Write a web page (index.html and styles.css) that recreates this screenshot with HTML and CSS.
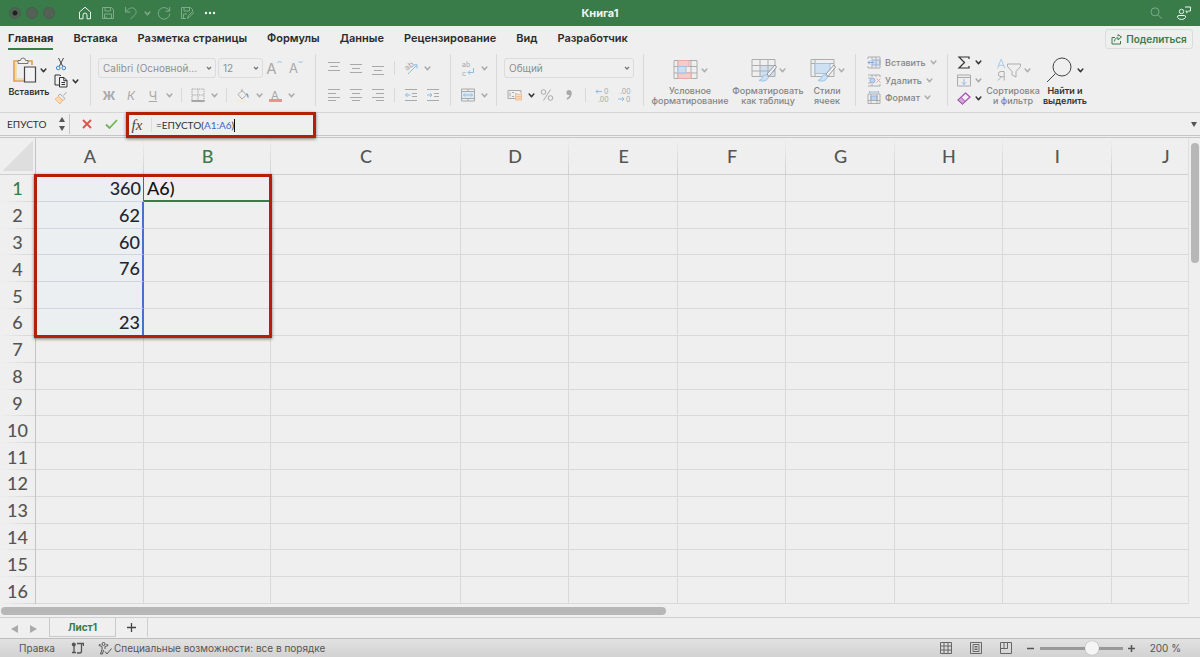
FILE: index.html
```html
<!DOCTYPE html>
<html lang="ru">
<head>
<meta charset="utf-8">
<title>Книга1</title>
<link rel="stylesheet" href="styles.css">
</head>
<body>
<svg class="defs" aria-hidden="true">
  <symbol id="chev" viewBox="0 0 6 6"><path d="M1 1.800 3 4 5 1.800" fill="none" stroke="currentColor" stroke-width="1.300" stroke-linecap="round" stroke-linejoin="round"/></symbol>
</svg>

<header class="titlebar">
  <div class="lights"><span class="light dot"></span><span class="light"></span><span class="light"></span></div>
  <div class="quick">
    <button class="q on" aria-label="Главная страница"><svg width="14" height="14" viewBox="0 0 14 14"><path d="M1.500 6 7 1.200 12.500 6V12.800H9V9a2 2 0 0 0-4 0v3.800H1.500z"/></svg></button>
    <button class="q" aria-label="Сохранить"><svg width="14" height="14" viewBox="0 0 14 14"><path d="M1.500 1.500h9l2 2v9h-11zM4 1.500V5h5.500V1.500M3.500 12.500V8h7v4.500M5 12.500V10.500"/></svg></button>
    <button class="q" aria-label="Отменить"><svg width="14" height="14" viewBox="0 0 14 14"><path d="M1.500 1v5h5M1.800 5.800C5 1.500 8.500 1 10.800 3c2.500 2.300 1 5-.6 6.500L6.500 13"/></svg></button>
    <button class="q narrow" aria-label="Список отмены"><svg class="chev"><use href="#chev"/></svg></button>
    <button class="q" aria-label="Повторить"><svg width="14" height="14" viewBox="0 0 14 14"><path d="M12.700 1v4.200H8.500M12.300 5A5.800 5.800 0 1 0 12.800 7.500"/></svg></button>
    <button class="q" aria-label="Сохранить как"><svg width="14" height="14" viewBox="0 0 14 14"><path d="M6 12.500H1.500v-11h9l2 2v2M4 1.500V5h5.500V1.500M3.500 12.500V8H7M7.500 12.500l1-3 4-4 1.200 1.300-4 4z"/></svg></button>
    <button class="q on" aria-label="Ещё"><svg width="14" height="14" viewBox="0 0 14 14"><g fill="currentColor" stroke="none"><circle cx="3" cy="7" r="1.200"/><circle cx="7" cy="7" r="1.200"/><circle cx="11" cy="7" r="1.200"/></g></svg></button>
  </div>
  <h1>Книга1</h1>
  <div class="tools">
    <button class="q" aria-label="Поиск"><svg width="14" height="14" viewBox="0 0 14 14"><circle cx="6" cy="5.800" r="4"/><path d="m9 8.800 4 4"/></svg></button>
    <button class="q on" aria-label="Совместная работа"><svg width="16" height="16" viewBox="0 0 16 16"><circle cx="5.500" cy="6.500" r="2.200"/><path d="M3 10.500h5.500q1.500 0 1 1.800-.8 2.200-4 2.200t-4-2.200q-.4-1.800 1.500-1.800zM9 2h5.500v4h-2l-1.800 1.800V6H9.500"/></svg></button>
  </div>
</header>

<nav class="tabs">
  <a class="tab current" href="#">Главная</a><a class="tab" href="#">Вставка</a><a class="tab" href="#">Разметка страницы</a><a class="tab" href="#">Формулы</a><a class="tab" href="#">Данные</a><a class="tab" href="#">Рецензирование</a><a class="tab" href="#">Вид</a><a class="tab" href="#">Разработчик</a>
  <button class="share"><svg width="11" height="11" viewBox="0 0 11 11"><path d="M4 3.500H1v6.500h8.500V7M3.500 7.500C3.500 5 5 3.800 7 3.800V5.800L10.500 3 7 .600v1.800"/></svg>Поделиться</button>
</nav>

<section class="ribbon">
  <div class="group g-clip">
    <button class="tall live">
      <span class="pic"><svg width="26" height="26" viewBox="0 0 26 26"><path d="M6 4H2v20h10M16 4h4v4" stroke="#e0a04c" stroke-width="1.600"/><path d="M4 6v16h8" stroke="#f0d79c" stroke-width="1.500"/><path d="M6 6.500V3.500h2.500a2.500 2.500 0 0 1 5 0H16v3z" stroke="#777"/><path d="M12.500 10h11v15h-11z" fill="#f3f3f3" stroke="#444" stroke-width="1.200"/></svg><svg class="chev"><use href="#chev"/></svg></span>
      <span>Вставить</span>
    </button>
    <div class="stack">
      <button class="ib live" aria-label="Вырезать"><svg width="14" height="14" viewBox="0 0 14 14"><path d="m4.500 1 4.300 8.500M9.500 1 5.200 9.500" stroke="#444"/><circle cx="4.200" cy="11" r="1.800" stroke="#3f87c8"/><circle cx="9.800" cy="11" r="1.800" stroke="#3f87c8"/></svg></button>
      <span class="pair live"><button class="ib" aria-label="Копировать"><svg width="14" height="14" viewBox="0 0 14 14"><path d="M5 11H1V1h5l1 1M5.500 3.500h4.500l3 3v6.500H5.500zM9.800 3.500v3.200H13M7.500 8.500h3.500M7.500 10.500h3.500"/></svg></button><button class="cb" aria-label="Параметры копирования"><svg class="chev"><use href="#chev"/></svg></button></span>
      <button class="ib" aria-label="Формат по образцу"><svg width="14" height="14" viewBox="0 0 14 14"><path d="m12.500 1-3 3.500M6 3l5 4.500-2 2-5-4.500z" stroke="#aaa"/><path d="m4.500 5.500 4 4L6 13 1 8z" fill="#f5dcc0" stroke="#eebb8c"/></svg></button>
    </div>
  </div>

  <div class="group rows g-font">
    <div class="row">
      <select class="font" aria-label="Шрифт"><option>Calibri (Основной...</option></select>
      <select class="size" aria-label="Размер шрифта"><option>12</option></select>
      <button class="ib w22" aria-label="Увеличить шрифт"><span class="big">A</span><svg class="mark" width="5" height="10" viewBox="0 0 5 10"><path d="m.5 3 2-2 2 2" stroke="#8fbbe2"/></svg></button>
      <button class="ib w22" aria-label="Уменьшить шрифт"><span class="mid">A</span><svg class="mark" width="5" height="10" viewBox="0 0 5 10"><path d="m.5 1 2 2 2-2" stroke="#8fbbe2"/></svg></button>
    </div>
    <div class="row">
      <button class="ib w22 bold">Ж</button><button class="ib w22 ital">К</button><button class="ib w22 under">Ч</button><button class="cb" aria-label="Вид подчёркивания"><svg class="chev"><use href="#chev"/></svg></button>
      <i class="sep"></i>
      <button class="ib w22" aria-label="Границы"><svg width="14" height="14" viewBox="0 0 14 14"><path d="M1 1h12v12M1 1v12M7 1v12M1 7h12" stroke-dasharray="1.500 .8"/><path d="M.5 13h13" stroke="#888" stroke-width="1.400"/></svg></button><button class="cb" aria-label="Виды границ"><svg class="chev"><use href="#chev"/></svg></button>
      <i class="sep"></i>
      <button class="ib w22" aria-label="Заливка"><svg width="14" height="14" viewBox="0 0 14 14"><path d="M6 1v3M2 6.500 6 2.500l4.500 4.500L6 11z"/><path d="M10.500 5.500q2 2 1.500 4" stroke="#6f9ecb" stroke-width="1.500"/><path d="M1 13h10" stroke="#f3ecd4" stroke-width="2"/></svg></button><button class="cb" aria-label="Цвет заливки"><svg class="chev"><use href="#chev"/></svg></button>
      <button class="ib w22 color">A</button><button class="cb" aria-label="Цвет текста"><svg class="chev"><use href="#chev"/></svg></button>
    </div>
  </div>

  <div class="group rows g-align">
    <div class="row">
      <button class="ib w22" aria-label="По верхнему краю"><svg width="14" height="14" viewBox="0 0 14 14"><path d="M1 1.500h12M3 5.500h8M1 9.500h12"/></svg></button><button class="ib w22" aria-label="По середине"><svg width="14" height="14" viewBox="0 0 14 14"><path d="M1 3.500h12M3 7.500h8M1 11.500h12"/></svg></button><button class="ib w22" aria-label="По нижнему краю"><svg width="14" height="14" viewBox="0 0 14 14"><path d="M1 5.500h12M3 9.500h8M1 13.500h12"/></svg></button>
      <i class="sep"></i>
      <button class="ib w22" aria-label="Ориентация"><svg width="16" height="16" viewBox="0 0 16 16"><text x="2" y="9" font-size="8" transform="rotate(-35 6 7)" class="gl">ab</text><path d="M5 14 14 5M10.500 4.800H14V8.500" stroke="#8fbbe2"/></svg></button><button class="cb" aria-label="Варианты ориентации"><svg class="chev"><use href="#chev"/></svg></button>
    </div>
    <div class="row">
      <button class="ib w22" aria-label="По левому краю"><svg width="14" height="14" viewBox="0 0 14 14"><path d="M1 1.500h12M1 5.500h8M1 9.500h12M1 12.500h8"/></svg></button><button class="ib w22" aria-label="По центру"><svg width="14" height="14" viewBox="0 0 14 14"><path d="M1 1.500h12M3 5.500h8M1 9.500h12M3 12.500h8"/></svg></button><button class="ib w22" aria-label="По правому краю"><svg width="14" height="14" viewBox="0 0 14 14"><path d="M1 1.500h12M5 5.500h8M1 9.500h12M5 12.500h8"/></svg></button>
      <i class="sep"></i>
      <button class="ib w22" aria-label="Уменьшить отступ"><svg width="14" height="14" viewBox="0 0 14 14"><path d="M1 1.500h12M8 5.500h5M8 8.500h5M1 12.500h12"/><path d="M6.500 7h-5M3.500 5l-2 2 2 2" stroke="#8fbbe2"/></svg></button><button class="ib w22" aria-label="Увеличить отступ"><svg width="14" height="14" viewBox="0 0 14 14"><path d="M1 1.500h12M8 5.500h5M8 8.500h5M1 12.500h12"/><path d="M1 7h5M4 5l2 2-2 2" stroke="#8fbbe2"/></svg></button>
    </div>
  </div>

  <div class="group rows g-wrap">
    <div class="row"><button class="ib w22" aria-label="Перенос текста"><svg width="14" height="18" viewBox="0 0 14 18"><text x="1" y="8" font-size="7" class="gl">ab</text><text x="1" y="17" font-size="7" class="gl">c</text><path d="M12.500 9v4.500H7M9 11.500l-2 2 2 2" stroke="#8fbbe2"/></svg></button><button class="cb" aria-label="Варианты переноса"><svg class="chev"><use href="#chev"/></svg></button></div>
    <div class="row"><button class="ib w22" aria-label="Объединить"><svg width="14" height="14" viewBox="0 0 14 14"><path d="M1 3.500h12v7H1z" fill="#dce8f4" stroke="none"/><path d="M.500 1h13v12H.500zM.500 3.500h13M.500 10.500h13M7 1v2.500M7 10.500V13"/><path d="M2.500 7h9M4 5.500 2.500 7 4 8.500M10 5.500 11.500 7 10 8.500" stroke="#8fbbe2"/></svg></button><button class="cb" aria-label="Варианты объединения"><svg class="chev"><use href="#chev"/></svg></button></div>
  </div>

  <div class="group rows g-number">
    <div class="row"><select class="format" aria-label="Числовой формат"><option>Общий</option></select></div>
    <div class="row">
      <button class="ib w22" aria-label="Денежный формат"><svg width="16" height="14" viewBox="0 0 16 14"><path d="M1 2.500h13v3M1 2.500v8h7M3 4.500v4M5 4.500h2M5 8.500h2M9 5v2"/><path d="M8.500 6.500h6v5.500h-6zM8.500 8.500h6M8.500 10.200h6" fill="#f9e2cb" stroke="#f0bf94"/></svg></button><button class="cb live" aria-label="Виды валют"><svg class="chev"><use href="#chev"/></svg></button>
      <button class="ib w22" aria-label="Процентный формат"><svg width="14" height="14" viewBox="0 0 14 14"><circle cx="3.500" cy="4" r="2.300"/><circle cx="10.500" cy="10" r="2.300"/><path d="M10.500 1.500 3.500 12.500"/></svg></button>
      <button class="ib w22" aria-label="Формат с разделителями"><svg width="10" height="14" viewBox="0 0 10 14"><circle cx="5" cy="4.500" r="2.600" fill="currentColor" stroke="none"/><path d="M6.900 5q0 4-4 6" stroke-width="1.600"/></svg></button>
      <i class="sep"></i>
      <button class="ib w22" aria-label="Увеличить разрядность"><svg width="14" height="16" viewBox="0 0 14 16"><text x="9" y="7" font-size="7" class="gl">0</text><text x="3" y="15" font-size="7" class="gl">.00</text><path d="M7 4.500H1M3 2.500l-2 2 2 2" stroke="#8fbbe2"/></svg></button><button class="ib w22" aria-label="Уменьшить разрядность"><svg width="14" height="16" viewBox="0 0 14 16"><text x="3" y="7" font-size="7" class="gl">.00</text><text x="9" y="15" font-size="7" class="gl">0</text><path d="M1 12h6M5 10l2 2-2 2" stroke="#8fbbe2"/></svg></button>
    </div>
  </div>

  <div class="group g-styles">
    <button class="tall"><span class="pic"><svg width="26" height="22" viewBox="0 0 26 22"><path d="M1 1.500h23v18H1zM5 1.500v18M18 1.500v18M1 7.500h23M1 14h23"/><path d="M5 1.500h11v6H5zM5 14h13v5.500H5z" fill="#f3cbc9" stroke="#e6aaa7"/><path d="M5 7.500h8V14H5z" fill="#c9dff2" stroke="#9cc3e6"/></svg><svg class="chev"><use href="#chev"/></svg></span><span>Условное<br>форматирование</span></button>
    <button class="tall"><span class="pic"><svg width="26" height="24" viewBox="0 0 26 24"><path d="M9 7.500h15V19H9z" fill="#cfe0f3" stroke="none"/><path d="M1 1.500h23v17H1zM9 1.500v17M17 1.500v17M1 7.500h23M1 13h23"/><path d="m24 7-8 9 2 2.500L25.500 9z" fill="#f3f3f3" stroke="#999"/><path d="M15.500 16.500q-4 0-4.500 4l-3 2q7 2 9.500-3z" fill="#cfe0f3" stroke="#9cc3e6"/></svg><svg class="chev"><use href="#chev"/></svg></span><span>Форматировать<br>как таблицу</span></button>
    <button class="tall"><span class="pic"><svg width="26" height="24" viewBox="0 0 26 24"><path d="M1 1.500h23v17H1zM5 1.500v17M1 5.500h23"/><path d="M5 5.500h15v10H5z" fill="#cfe0f3" stroke="#9cc3e6"/><path d="m24 7-8 9 2 2.500L25.500 9z" fill="#f3f3f3" stroke="#999"/><path d="M15.500 16.500q-4 0-4.500 4l-3 2q7 2 9.500-3z" fill="#cfe0f3" stroke="#9cc3e6"/></svg><svg class="chev"><use href="#chev"/></svg></span><span>Стили<br>ячеек</span></button>
  </div>

  <div class="group g-cells">
    <button class="line"><svg width="14" height="13" viewBox="0 0 14 13"><path d="M5 4h8v5H5z" fill="#cfdef3" stroke="#8fb2e2"/><path d="M1 3V1h12v11H1v-2M5 1v2.500M9 1v11M5 9v3"/><path d="M7 6.500H1M3 4.500l-2 2 2 2" stroke="#7fa9de"/></svg><span>Вставить</span><svg class="chev"><use href="#chev"/></svg></button>
    <button class="line"><svg width="14" height="13" viewBox="0 0 14 13"><path d="M1 1h12v2M1 12h12v-2M1 4h3M1 9h3M5 1v2M9 1v2M5 10v2"/><circle cx="5.500" cy="6.500" r="2.500" fill="#bdd4f0" stroke="#8fb2e2"/><path d="m9.500 4.500 4 4M13.500 4.500l-4 4" stroke="#e8a09a"/></svg><span>Удалить</span><svg class="chev"><use href="#chev"/></svg></button>
    <button class="line"><svg width="14" height="13" viewBox="0 0 14 13"><path d="M4 5h6v4.500H4z" fill="#bdd4f0" stroke="#8fb2e2"/><path d="M1 3h12v9.500H1zM4 3v9.500M10 3v9.500M1 9.500h12"/><path d="M2.500 1h9M2.500 0v2M11.500 0v2" stroke="#8fbbe2"/></svg><span>Формат</span><svg class="chev"><use href="#chev"/></svg></button>
  </div>

  <div class="group g-edit">
    <div class="stack even">
      <span class="pair live"><button class="ib" aria-label="Сумма"><svg width="14" height="13" viewBox="0 0 14 13"><path d="M12 3V1H2l5.500 5.500L2 12h10v-2" stroke-width="1.200"/></svg></button><button class="cb" aria-label="Функции"><svg class="chev"><use href="#chev"/></svg></button></span>
      <span class="pair"><button class="ib" aria-label="Заполнить"><svg width="14" height="13" viewBox="0 0 14 13"><path d="M.500 1h13v11H.500zM.500 3.500h13"/><path d="M7 5v5.500M4.800 8.300 7 10.500l2.200-2.200" stroke="#8fbbe2"/></svg></button><button class="cb" aria-label="Варианты заполнения"><svg class="chev"><use href="#chev"/></svg></button></span>
      <span class="pair live"><button class="ib" aria-label="Очистить"><svg width="14" height="13" viewBox="0 0 14 13"><path d="M8.500 1 13 5 5.500 12 1 8z" stroke="#a34cb0" stroke-width="1.200"/><path d="M4 5.300 8.200 9.500 5.500 12 1 8z" fill="#d7a5de" stroke="#a34cb0"/></svg></button><button class="cb" aria-label="Что очистить"><svg class="chev"><use href="#chev"/></svg></button></span>
    </div>
    <button class="tall"><span class="pic"><svg width="26" height="24" viewBox="0 0 26 24"><path d="M1.500 10.500 5.200 1l3.700 9.500M2.800 7.300h4.800" stroke="#a9cbe8"/><path d="M8.200 22.500v-9H5a2.500 2.500 0 0 0 0 5.200h3.200M5.500 18.700 1.800 22.500"/><path d="M11.500 6h13v2.500l-4.500 5V19l-4-2v-3.500l-4.500-5z"/></svg><svg class="chev"><use href="#chev"/></svg></span><span>Сортировка<br>и фильтр</span></button>
    <button class="tall live"><span class="pic find"><svg width="26" height="26" viewBox="0 0 26 26"><circle cx="16" cy="10" r="9"/><path d="M9.500 16.500 1 25"/></svg><svg class="chev"><use href="#chev"/></svg></span><span>Найти и<br>выделить</span></button>
  </div>
</section>

<section class="formulabar">
  <input class="namebox" aria-label="Имя" value="ЕПУСТО">
  <button class="fb step" aria-label="Список имён"><svg width="8" height="14" viewBox="0 0 8 14"><path d="M1 5 4 0l3 5zM1 9l3 5 3-5z" fill="#555" stroke="none"/></svg></button>
  <button class="fb" aria-label="Отмена"><svg width="10" height="10" viewBox="0 0 10 10"><path d="m1 1 8 8M9 1 1 9" stroke="#d9534f" stroke-width="1.800"/></svg></button>
  <button class="fb" aria-label="Ввод"><svg width="13" height="10" viewBox="0 0 13 10"><path d="m1 5.500 3.500 3.500L12 1" stroke="#6fb558" stroke-width="1.800"/></svg></button>
  <div class="entry">
    <button class="fx" aria-label="Вставить функцию"><i>fx</i></button>
    <div class="formula" role="textbox" aria-label="Строка формул" tabindex="0">=ЕПУСТО(<span class="ref">A1:A6</span>)<span class="caret"></span></div>
  </div>
  <button class="fb more" aria-label="Развернуть"><svg width="6" height="5" viewBox="0 0 6 5"><path d="M0 0h6L3 5z" fill="#555" stroke="none"/></svg></button>
</section>

<main class="sheet">
  <div class="gridwrap">
    <table>
      <colgroup><col class="c-num"><col class="c-a"><col class="c-b"><col class="c-c"><col><col><col><col><col><col><col></colgroup>
      <thead><tr><th class="corner"></th><th>A</th><th class="act">B</th><th>C</th><th>D</th><th>E</th><th>F</th><th>G</th><th>H</th><th>I</th><th>J</th></tr></thead>
      <tbody>
        <tr><th class="act">1</th><td class="src first">360</td><td class="edit">A6)</td><td></td><td></td><td></td><td></td><td></td><td></td><td></td><td></td></tr>
        <tr><th>2</th><td class="src">62</td><td></td><td></td><td></td><td></td><td></td><td></td><td></td><td></td><td></td></tr>
        <tr><th>3</th><td class="src">60</td><td></td><td></td><td></td><td></td><td></td><td></td><td></td><td></td><td></td></tr>
        <tr><th>4</th><td class="src">76</td><td></td><td></td><td></td><td></td><td></td><td></td><td></td><td></td><td></td></tr>
        <tr><th>5</th><td class="src"></td><td></td><td></td><td></td><td></td><td></td><td></td><td></td><td></td><td></td></tr>
        <tr><th>6</th><td class="src">23</td><td></td><td></td><td></td><td></td><td></td><td></td><td></td><td></td><td></td></tr>
        <tr><th>7</th><td></td><td></td><td></td><td></td><td></td><td></td><td></td><td></td><td></td><td></td></tr>
        <tr><th>8</th><td></td><td></td><td></td><td></td><td></td><td></td><td></td><td></td><td></td><td></td></tr>
        <tr><th>9</th><td></td><td></td><td></td><td></td><td></td><td></td><td></td><td></td><td></td><td></td></tr>
        <tr><th>10</th><td></td><td></td><td></td><td></td><td></td><td></td><td></td><td></td><td></td><td></td></tr>
        <tr><th>11</th><td></td><td></td><td></td><td></td><td></td><td></td><td></td><td></td><td></td><td></td></tr>
        <tr><th>12</th><td></td><td></td><td></td><td></td><td></td><td></td><td></td><td></td><td></td><td></td></tr>
        <tr><th>13</th><td></td><td></td><td></td><td></td><td></td><td></td><td></td><td></td><td></td><td></td></tr>
        <tr><th>14</th><td></td><td></td><td></td><td></td><td></td><td></td><td></td><td></td><td></td><td></td></tr>
        <tr><th>15</th><td></td><td></td><td></td><td></td><td></td><td></td><td></td><td></td><td></td><td></td></tr>
        <tr><th>16</th><td></td><td></td><td></td><td></td><td></td><td></td><td></td><td></td><td></td><td></td></tr>
      </tbody>
    </table>
    <div class="callout"></div>
  </div>
  <div class="vscroll"><div class="vthumb"></div></div>
</main>
<div class="hscroll"><div class="hthumb"></div></div>

<nav class="sheets">
  <button class="arrow" aria-label="Предыдущий лист"><svg width="7" height="8" viewBox="0 0 7 8"><path d="M7 0v8L0 4z" fill="#aaa" stroke="none"/></svg></button>
  <button class="arrow" aria-label="Следующий лист"><svg width="7" height="8" viewBox="0 0 7 8"><path d="M0 0v8l7-4z" fill="#aaa" stroke="none"/></svg></button>
  <button class="sheettab">Лист1</button>
  <button class="add" aria-label="Новый лист"><svg width="9" height="9" viewBox="0 0 9 9"><path d="M4.500 0v9M0 4.500h9" stroke="#444" stroke-width="1.300"/></svg></button>
</nav>

<footer class="status">
  <span class="mode">Правка</span>
  <button class="sb" aria-label="Запись макроса"><svg width="13" height="13" viewBox="0 0 13 13"><circle cx="2.800" cy="2.500" r="2" fill="#555" stroke="none"/><path d="M3 4v6M1 10.500h4M6 1.500h6.500v2.500M10.500 1.500v7.500q0 2-2 2H6" stroke="#555" stroke-width="1.300"/></svg></button>
  <button class="access"><svg width="14" height="13" viewBox="0 0 14 13"><circle cx="5.500" cy="2" r="1.500"/><path d="M1 3.500 4 4.500v3L2.500 12M10 3.500 7 4.500V7M1 3.500q0-1.500 1.500-1M10 3.500q0-1.500-1.500-1M5.500 8 4.500 12H2.500M7 9.500l2 2.500 4.500-5.500"/></svg>Специальные возможности: все в порядке</button>
  <div class="views">
    <button class="sb" aria-label="Обычный"><svg width="12" height="12" viewBox="0 0 12 12"><path d="M.500.500h11v11H.500zM4 .500v11M8 .500v11M.500 4h11M.500 8h11" stroke="#666"/></svg></button>
    <button class="sb" aria-label="Разметка страницы"><svg width="12" height="12" viewBox="0 0 12 12"><path d="M.500.500h11v11H.500zM3 2.500h6v7H3zM4.500 4.500h3M4.500 6h3M4.500 7.500h3" stroke="#666"/></svg></button>
    <button class="sb" aria-label="Страничный режим"><svg width="12" height="12" viewBox="0 0 12 12"><path d="M.500.500h11v11H.500zM4 .500v6M.500 6.500h7V.500" stroke="#666"/></svg></button>
  </div>
  <div class="zoom">
    <button class="sb sm" aria-label="Уменьшить"><svg width="7" height="7" viewBox="0 0 7 7"><path d="M0 3.500h7" stroke="#555" stroke-width="1.500"/></svg></button>
    <input type="range" min="10" max="300" value="200" aria-label="Масштаб">
    <button class="sb sm" aria-label="Увеличить"><svg width="7" height="7" viewBox="0 0 7 7"><path d="M0 3.500h7M3.500 0v7" stroke="#555" stroke-width="1.500"/></svg></button>
  </div>
  <span class="percent">200 %</span>
</footer>
</body>
</html>
```

FILE: styles.css
```css
* { box-sizing: border-box; }
html, body { margin: 0; height: 100%; }
body {
  display: flex;
  flex-direction: column;
  height: 100vh;
  overflow: hidden;
  background: #efefef;
  color: #262626;
  font-family: Inter, "Liberation Sans", sans-serif;
  font-size: 10px;
}
button {
  display: flex;
  align-items: center;
  justify-content: center;
  padding: 0;
  border: 0;
  background: none;
  color: inherit;
  font: inherit;
}
svg { display: block; flex: none; fill: none; stroke: currentColor; stroke-width: 1; }
.defs { position: absolute; width: 0; height: 0; }
.chev { width: 7px; height: 7px; }
.gl { fill: currentColor; stroke: none; font-family: Inter, sans-serif; }

/* title bar */
.titlebar {
  display: grid;
  grid-template-columns: 1fr auto 1fr;
  align-items: center;
  flex: none;
  height: 26px;
  background: #397b49;
  color: #f0f5f1;
}
.lights { display: flex; gap: 5px; padding-left: 9px; grid-column: 1; grid-row: 1; }
.light { width: 12px; height: 12px; border-radius: 50%; background: #546156; border: 1px solid #47604b; }
.dot { background: radial-gradient(circle, #1c241d 2px, #546156 3px); }
.quick { display: flex; gap: 9px; padding-left: 78px; grid-column: 1; grid-row: 1; }
.q { width: 14px; height: 20px; color: #80ab89; }
.q.narrow { width: 8px; margin: 0 -3px 0 -4px; }
.q.on { color: #eef5ef; }
h1 { margin: 0; font-size: 11px; font-weight: 700; grid-column: 2; }
.tools { display: flex; justify-content: flex-end; gap: 14px; padding-right: 9px; grid-column: 3; }

/* ribbon tabs */
.tabs { display: flex; align-items: center; gap: 20px; flex: none; height: 26px; padding: 0 8px; }
.tab {
  height: 22px;
  line-height: 20px;
  border-bottom: 2px solid transparent;
  color: #2b2b2b;
  font-size: 11px;
  font-weight: 600;
  text-decoration: none;
  white-space: nowrap;
}
.tab.current { border-color: #397b49; font-weight: 700; }
.share {
  gap: 4px;
  width: 88px;
  height: 20px;
  margin-left: auto;
  margin-right: -1px;
  border: 1px solid #dcdcdc;
  border-radius: 3px;
  color: #397b49;
  font-weight: 600;
}

/* ribbon */
.ribbon {
  display: flex;
  flex: none;
  height: 61px;
  padding: 2px 0 6px;
  border-bottom: 1px solid #d6d6d6;
  color: #a9a9a9;
}
.group { display: flex; flex: none; border-right: 1px solid #d9d9d9; }
.group:last-child { border-right: 0; }
.live { color: #333; font-weight: 600; }
.rows { flex-direction: column; justify-content: space-between; padding: 4px 0 0; }
.row { display: flex; align-items: center; height: 20px; }
.rows .row + .row { height: 22px; }
.ib { width: 14px; height: 16px; }
.w22 { width: 22px; }
.cb { width: 14px; height: 16px; }
.row .cb { width: 10px; }
.pair { display: flex; }
.stack { display: flex; flex-direction: column; justify-content: space-between; }
.sep { flex: none; width: 1px; height: 14px; margin: 0 5px; background: #d9d9d9; }
.cb + .sep { margin-left: 7px; }
.tall { flex-direction: column; justify-content: flex-start; font-size: 9px; line-height: 10px; white-space: nowrap; }
.tall:not(.live) { color: #858585; font-weight: 500; }
.pic { display: flex; align-items: center; justify-content: center; gap: 2px; height: 30px; }
.pic.find { gap: 5px; }
.tall:not(.live) svg { color: #adadad; }
.live .pic svg:first-child { color: #444; }

select {
  appearance: none;
  height: 20px;
  padding: 0 4px;
  border: 1px solid #dcdcdc;
  border-radius: 3px;
  background: url("data:image/svg+xml,%3Csvg xmlns='http://www.w3.org/2000/svg' width='6' height='6'%3E%3Cpath d='M1 2 3 4 5 2' fill='none' stroke='%23777' stroke-width='1.3'/%3E%3C/svg%3E") no-repeat right 3px center;
  color: #909090;
  font: inherit;
}
.font { width: 118px; margin-right: 2px; }
.size { width: 45px; }
.format { width: 130px; }

.g-clip { width: 91px; padding-left: 8px; gap: 4px; }
.g-clip .tall { width: 42px; line-height: 12px; }
.g-clip .tall .pic { height: 32px; }
.g-clip .stack { padding: 2px 0 0; }
.g-font { width: 225px; padding-left: 7px; }
.big { font-size: 15px; }
.mid { font-size: 13px; }
.mark { align-self: flex-start; }
.bold { font-size: 12px; font-weight: 700; }
.ital { font-size: 12px; font-style: italic; }
.under { font-size: 12px; text-decoration: underline; }
.color { height: 14px; font-size: 12px; background: linear-gradient(#e9938d, #e9938d) no-repeat center bottom / 13px 3px; }
.g-align { width: 135px; padding-left: 7px; }
.g-wrap { width: 46px; padding-left: 6px; }
.g-number { width: 147px; padding-left: 7px; }
.g-styles { width: 212px; padding-left: 7px; gap: 3px; }
.g-styles .tall:nth-child(1) { width: 78px; }
.g-styles .tall:nth-child(2) { width: 72px; }
.g-styles .tall:nth-child(3) { width: 40px; }
.g-styles .pic, .g-edit .pic { height: 34px; }
.g-cells { width: 92px; padding-left: 11px; flex-direction: column; justify-content: space-between; align-items: flex-start; }
.line { gap: 4px; height: 17px; color: #858585; font-size: 9px; font-weight: 500; }
.line > svg { color: #adadad; }
.g-edit { padding-left: 9px; gap: 1px; }
.g-edit .tall { width: 54px; }
.g-edit .tall.live { width: 48px; }

/* formula bar */
.formulabar { display: flex; align-items: center; flex: none; height: 25px; border-bottom: 3px double #c6c6c6; }
.namebox {
  width: 58px;
  height: 20px;
  padding: 0 0 0 7px;
  border: 0;
  background: none;
  color: #333;
  font: 10px Lato, "Noto Sans", sans-serif;
}
.fb { width: 25px; height: 20px; }
.step { width: 12px; border-right: 1px solid #c6c6c6; margin-right: 4px; padding-right: 3px; }
.entry {
  display: flex;
  align-items: center;
  width: 190px;
  height: 26px;
  margin: -1px 0 -3px 2px;
  border: 3px solid #b51f08;
  box-shadow: 0 1px 3px rgba(0, 0, 0, .5);
  z-index: 1;
}
.fx { width: 23px; height: 14px; padding-right: 6px; border-right: 1px solid #ddd; color: #444; font: 15px "Liberation Serif", serif; }
.formula { display: flex; align-items: center; padding-left: 4px; color: #333; font: 10px Lato, "Noto Sans", sans-serif; }
.ref { color: #3a66cc; }
.caret { width: 1px; height: 13px; background: #111; }
.more { width: 12px; margin-left: auto; }

/* worksheet */
.sheet { display: flex; flex: 1; min-height: 0; }
.gridwrap { position: relative; flex: 1; min-width: 0; overflow: hidden; }
table {
  width: 1220px;
  height: 100%;
  table-layout: fixed;
  border-collapse: separate;
  border-spacing: 0;
  color: #555;
  font-family: Lato, "Noto Sans", sans-serif;
  font-size: 18px;
}
.c-num { width: 36px; }
.c-a { width: 108px; }
.c-b { width: 127px; }
.c-c { width: 190px; }
th, td { padding: 0; font-weight: 500; line-height: 20px; }
thead tr { height: 37px; }
tbody tr { height: 26px; }
thead th {
  border-bottom: 1px solid #cfcfcf;
  background: linear-gradient(transparent, #d0d0d0) no-repeat right / 1px 100%;
}
thead .act { border-bottom-color: #397b49; }
.act { color: #397b49; }
thead .corner { border-right: 1px solid #c4c4c4; background: linear-gradient(135deg, transparent 50%, #dedede 50%) no-repeat 3px 3px / 30px 30px; }
tbody th { border-right: 1px solid #c4c4c4; background: linear-gradient(90deg, transparent, #d4d4d4) no-repeat bottom / 100% 1px; }
td { border-right: 1px solid #d9d9d9; border-bottom: 1px solid #d9d9d9; }
.src { padding-right: 2px; border-right: 2px solid #4a70cf; border-bottom-color: #d0d6e0; background: #ebeff1; color: #22242e; text-align: right; }
.src.first { border-right: 1px solid #397b49; }
.edit { padding-left: 3px; border-bottom-color: #397b49; box-shadow: inset 0 -1px #397b49; color: #111; text-align: left; }
.callout {
  position: absolute;
  left: 34px;
  top: 36px;
  width: 238px;
  height: 164px;
  border: 3px solid #b51f08;
  box-shadow: 0 1px 3px rgba(0, 0, 0, .5);
}
.vscroll { width: 12px; padding: 5px 1px 0 2px; border-left: 1px solid #dedede; }
.vthumb { height: 120px; border-radius: 4px; background: #b7b7b7; }
.hscroll { flex: none; height: 14px; padding: 3px 1px; border-bottom: 1px solid #cfcfcf; }
.hthumb { width: 55.5%; height: 8px; border-radius: 4px; background: #b7b7b7; }

/* sheet tabs */
.sheets { display: flex; flex: none; height: 20px; padding-left: 5px; }
.arrow { width: 19px; height: 21px; }
.arrow + .arrow { margin-right: 6px; }
.sheettab {
  width: 67px;
  height: 19px;
  border: 1px solid #c9c9c9;
  border-top: 0;
  color: #397b49;
  font-weight: 700;
}
.add { width: 32px; height: 19px; border-right: 1px solid #cfcfcf; }

/* status bar */
.status {
  display: flex;
  align-items: center;
  flex: none;
  height: 19px;
  padding: 0 19px;
  border-top: 1px solid #bdbdbd;
  background: linear-gradient(#e2e2e2, #d2d2d2);
  color: #555;
  font-size: 10px;
  font-weight: 400;
}
.sb { width: 14px; height: 16px; }
.sm { width: 8px; }
.mode { margin-right: 16px; }
.access { gap: 2px; margin-left: 13px; }
.views { display: flex; gap: 16px; margin-left: auto; }
.zoom { display: flex; align-items: center; gap: 5px; margin: 0 14px; }
input[type="range"] { appearance: none; width: 83px; height: 14px; margin: 0; background: linear-gradient(#989898, #989898) no-repeat center / 100% 3px; }
input[type="range"]::-webkit-slider-thumb { appearance: none; width: 14px; height: 14px; border-radius: 50%; background: #f5f5f5; box-shadow: 0 0 1px #888; }
```
